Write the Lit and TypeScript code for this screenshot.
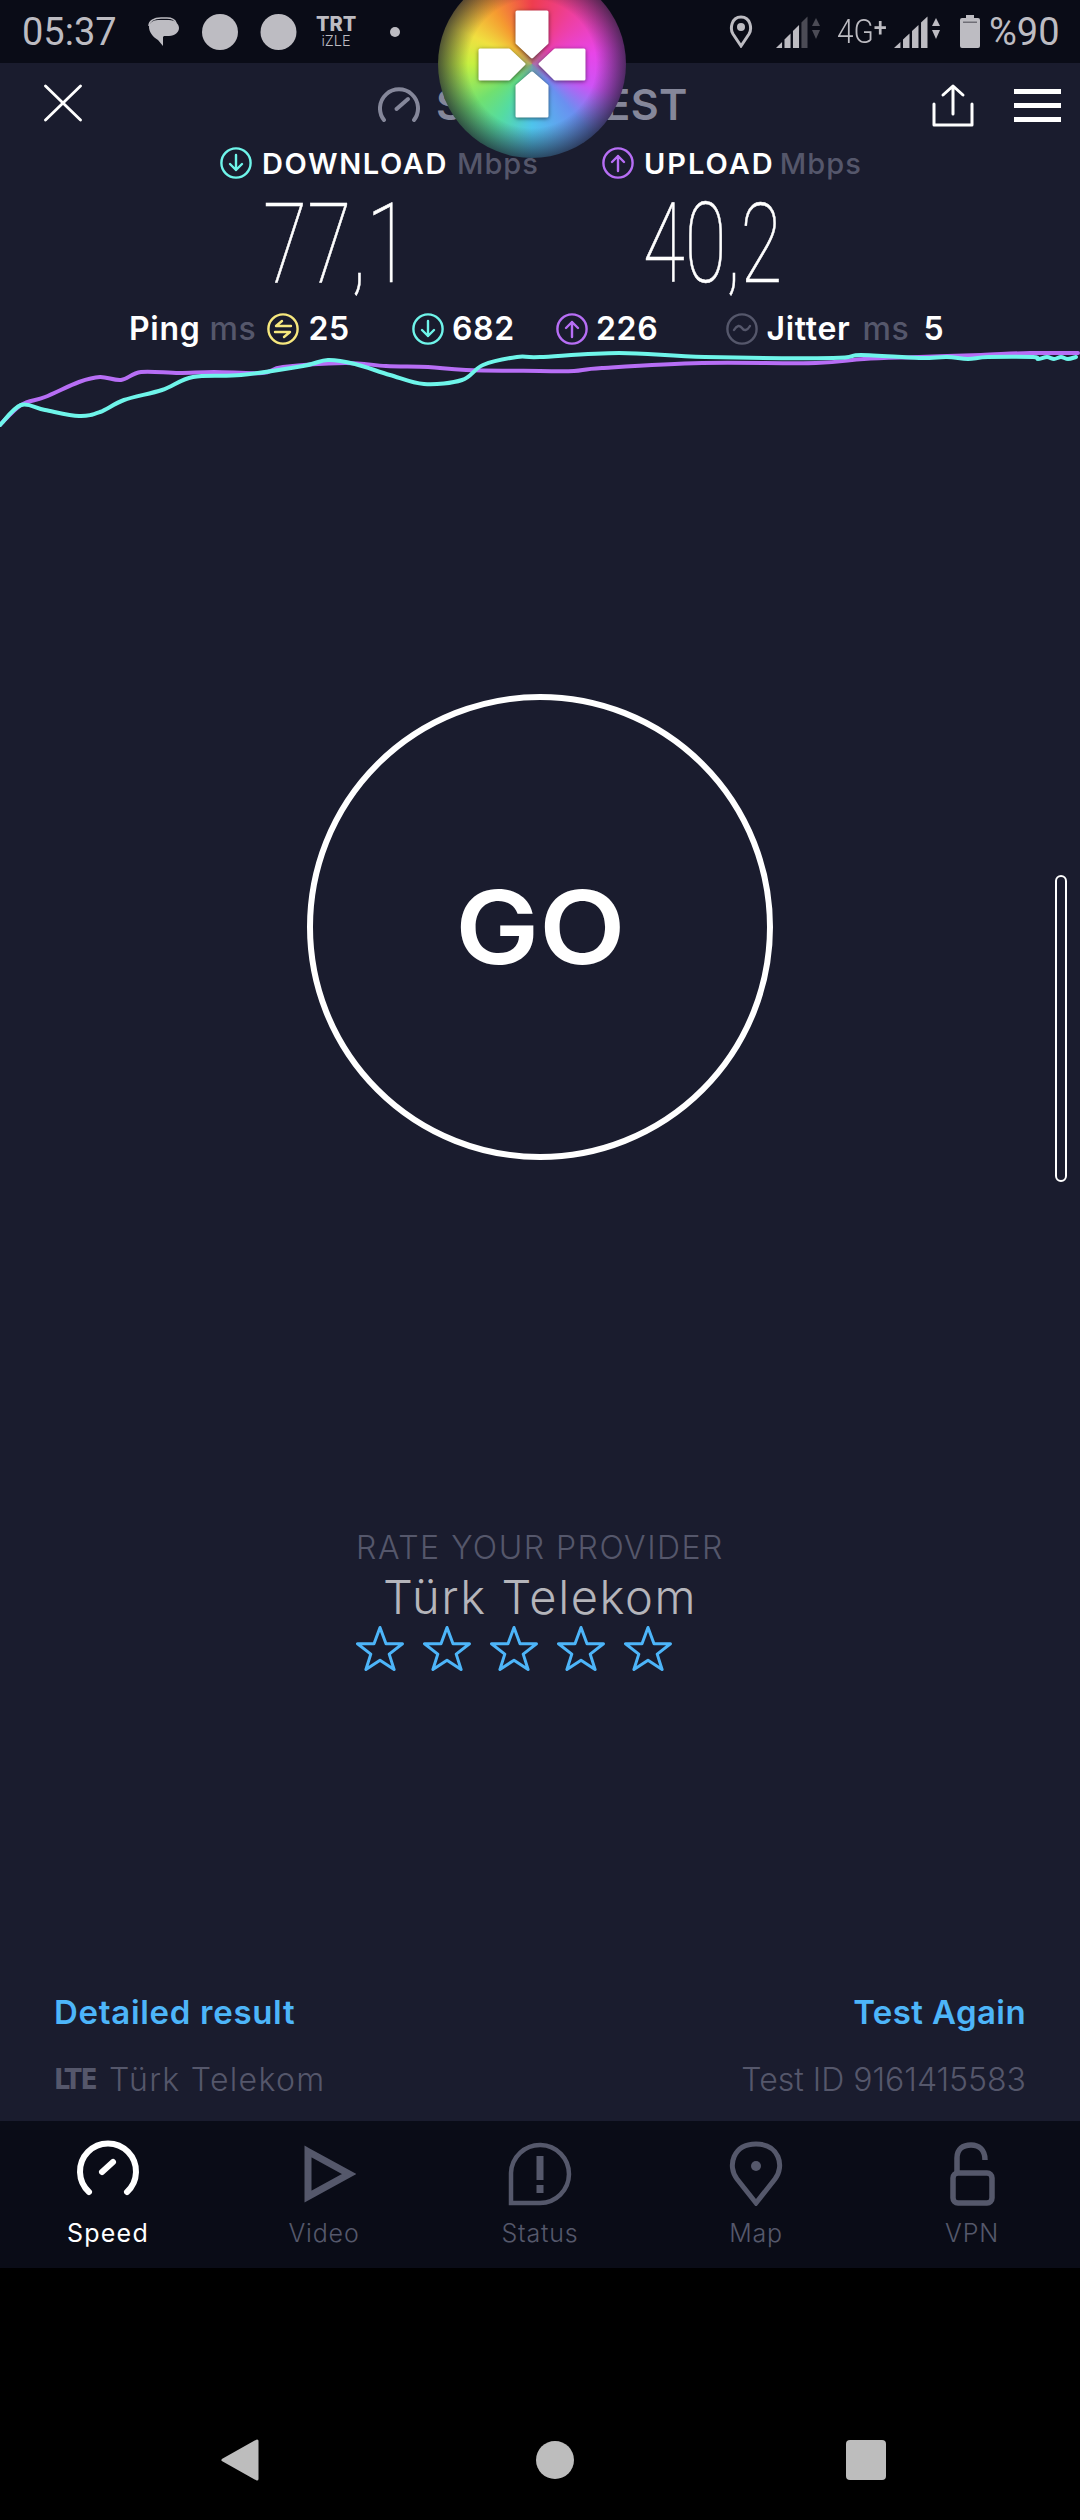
import { css, html, LitElement, svg } from "lit";
import { customElement } from "lit/decorators.js";

type Point = [number, number];

// chart traces, in page pixels
const DOWN_TRACE: Point[] = [
  [0, 425], [21, 405], [45, 410], [79, 416], [100, 412], [124, 400], [162, 390], [193, 377], [241, 375],
  [303, 366], [328, 360], [355, 364], [390, 375], [424, 384], [462, 380], [483, 365], [517, 357], [540, 357],
  [619, 353], [705, 357], [833, 358], [861, 355], [919, 358], [947, 357], [968, 359], [988, 357], [1033, 357],
  [1038, 359], [1047, 357], [1054, 359], [1061, 357], [1068, 359], [1076, 357],
];
const UP_TRACE: Point[] = [
  [0, 425], [21, 405], [45, 397], [79, 382], [100, 377], [121, 380], [141, 372], [179, 373], [214, 372],
  [262, 373], [283, 367], [345, 363], [386, 366], [428, 367], [466, 370], [540, 371], [574, 371], [602, 368],
  [702, 363], [816, 363], [864, 359], [919, 357], [981, 355], [1030, 353], [1078, 353],
];
const GRAPH_TOP = 345;

// catmull-rom through the samples so the lines stay smooth
function tracePath(points: Point[]) {
  let d = `M${points[0][0]} ${points[0][1] - GRAPH_TOP}`;
  for (let i = 0; i < points.length - 1; i++) {
    const p0 = points[Math.max(i - 1, 0)];
    const p1 = points[i];
    const p2 = points[i + 1];
    const p3 = points[Math.min(i + 2, points.length - 1)];
    const c1x = p1[0] + (p2[0] - p0[0]) / 6;
    const c1y = p1[1] + (p2[1] - p0[1]) / 6 - GRAPH_TOP;
    const c2x = p2[0] - (p3[0] - p1[0]) / 6;
    const c2y = p2[1] - (p3[1] - p1[1]) / 6 - GRAPH_TOP;
    d += `C${c1x.toFixed(1)} ${c1y.toFixed(1)} ${c2x.toFixed(1)} ${c2y.toFixed(1)} ${p2[0]} ${p2[1] - GRAPH_TOP}`;
  }
  return d;
}

const ringGlyphs = {
  down: "M16 8v15M10 17l6 6 6-6",
  up: "M16 24V9M10 15l6-6 6 6",
  ping: "M24 13H9l6-5M8 19h15l-6 5",
  jitter: "M8 17c3-5 6-5 8-2s5 3 8-2",
};

function ringIcon(color: string, glyph: keyof typeof ringGlyphs) {
  return html`<svg class="ring" width="32" height="32" viewBox="0 0 32 32" fill="none" stroke=${color} stroke-width="2.4" stroke-linecap="round" stroke-linejoin="round">
    <circle cx="16" cy="16" r="14.6"></circle>
    <path d=${ringGlyphs[glyph]}></path>
  </svg>`;
}

function signalBars(width: number, litBars: number) {
  const bars = [0, 0.265, 0.53, 0.795];
  const barW = width * 0.19;
  return bars.map((start, i) => {
    const x0 = start * width;
    const x1 = x0 + barW;
    return svg`<polygon fill=${i < litBars ? "#bdbcc2" : "#4b4b55"} points="${x0},32 ${x0},${32 - (x0 * 32) / width} ${x1},${32 - (x1 * 32) / width} ${x1},32"></polygon>`;
  });
}

function signalIcon(width: number, litBars: number, arrowColor: string) {
  return html`<svg width=${width + 12} height="32" viewBox="0 0 ${width + 12} 32">
    ${signalBars(width, litBars)}
    <path fill=${arrowColor} d="M${width + 8} 2l4 8h-8zM${width + 4} 14h8l-4 9z"></path>
  </svg>`;
}

function star() {
  return html`<svg width="48" height="46" viewBox="0 0 48 46" fill="none" stroke="#4db5f9" stroke-width="3" stroke-linejoin="round">
    <path d="M24 2.5l6 16.2h16.5l-13.3 10.4 4.9 15.4L24 35.2 9.900 44.500l4.900-15.400L1.500 18.700H18z"></path>
  </svg>`;
}

@customElement("app-root")
export class AppRoot extends LitElement {
  static override styles = css`
    :host {
      display: block;
      position: relative;
      width: 1080px;
      height: 2520px;
      overflow: hidden;
      background: #000;
      font-family: Inter, "Noto Sans", sans-serif;
      color: #fff;
    }

    svg {
      display: block;
      flex: none;
    }

    /* system status bar */
    .status {
      display: flex;
      align-items: center;
      height: 63px;
      background: #0a0c17;
      color: #bdbcc2;
      font-family: Roboto, sans-serif;
      font-size: 38px;
      padding-left: 22px;
    }
    .status .time {
      width: 125px;
      flex: none;
    }
    .trt {
      width: 40px;
      margin-left: 19px;
      flex: none;
      text-align: center;
      font-family: Inter, sans-serif;
      line-height: 1;
    }
    .trt b {
      display: block;
      font-size: 20px;
      font-weight: 800;
      height: 19px;
      line-height: 18px;
    }
    .trt span {
      display: block;
      font-size: 14.500px;
      font-weight: 300;
      height: 14px;
    }
    .status-dot {
      width: 10px;
      height: 10px;
      border-radius: 50%;
      background: #bdbcc2;
      margin-left: 34px;
      flex: none;
    }
    .status-right {
      display: flex;
      align-items: center;
      margin-left: 329px;
    }
    .net {
      width: 50px;
      margin-left: 17px;
      flex: none;
      font-size: 33px;
      font-weight: 300;
      line-height: 1;
    }
    .net span {
      display: inline-block;
      transform: scaleX(0.9);
      transform-origin: left center;
      white-space: nowrap;
    }
    .net sup {
      font-size: 26px;
      font-weight: 500;
      vertical-align: 7px;
      line-height: 0;
    }

    /* results page */
    main {
      display: flex;
      flex-direction: column;
      height: 2058px;
      background: #1a1c2e;
    }

    .app-bar {
      display: flex;
      align-items: flex-start;
      height: 84px;
      padding-top: 20px;
      box-sizing: border-box;
      padding-left: 44px;
    }
    .brand {
      display: flex;
      align-items: center;
      margin-left: 296px;
      width: 555px;
      height: 42px;
      color: #85879a;
      font-size: 43px;
      font-weight: 600;
    }
    .brand span {
      margin-left: 16px;
      letter-spacing: 0.4px;
    }
    .menu {
      display: flex;
      flex-direction: column;
      gap: 9px;
      margin: 6px 0 0 40px;
      width: 47px;
    }
    .menu i {
      display: block;
      height: 5px;
      background: #fff;
    }

    .speed-labels {
      display: flex;
      height: 34px;
      padding-left: 220px;
      font-size: 29px;
      font-weight: 600;
      line-height: 32px;
    }
    .speed-label {
      display: flex;
      align-items: center;
      height: 32px;
      white-space: nowrap;
    }
    .speed-label.down {
      width: 382px;
    }
    .speed-label b {
      font-weight: 600;
      margin: 2px 0 0 10px;
      letter-spacing: 1.6px;
    }
    .speed-label.up b {
      letter-spacing: 2px;
    }
    .speed-label em {
      font-style: normal;
      font-weight: 500;
      color: #55576b;
      margin: 2px 0 0 9px;
      letter-spacing: 1px;
    }
    .speed-label.up em {
      margin-left: 5px;
    }

    .speed-values {
      display: flex;
      height: 131px;
      padding-left: 263px;
      box-sizing: border-box;
      padding-top: 3px;
      font-family: Roboto, sans-serif;
      font-weight: 100;
      font-size: 112px;
      line-height: 119px;
    }
    .speed-values div {
      width: 383px;
    }
    .speed-values span {
      display: inline-block;
      transform: scaleX(0.72);
      transform-origin: left center;
      -webkit-text-stroke: 0.6px #fff;
    }
    .speed-values .upload {
      margin-left: -3px;
      transform: scaleX(0.68);
    }

    .stats {
      display: flex;
      align-items: center;
      height: 33px;
      padding-left: 129px;
      font-size: 32px;
      font-weight: 600;
      line-height: 32px;
      letter-spacing: 0.7px;
      white-space: nowrap;
    }
    .stats span,
    .stats svg,
    .stats em {
      flex: none;
    }
    .stats em {
      font-style: normal;
      font-weight: 500;
      color: #55576b;
    }
    .stats .with-icon {
      display: flex;
    }

    .graph {
      height: 85px;
    }

    .go {
      display: flex;
      align-items: center;
      justify-content: center;
      width: 466px;
      height: 466px;
      box-sizing: border-box;
      margin: 264px 0 0 307px;
      border: 6px solid #fff;
      border-radius: 50%;
      font-size: 102px;
      font-weight: 600;
    }
    .go span {
      display: inline-block;
      transform: scaleX(1.1);
    }

    .rate {
      margin-top: 369px;
      text-align: center;
    }
    .rate-title {
      font-size: 32px;
      font-weight: 300;
      line-height: 38px;
      color: #55576b;
      letter-spacing: 1.5px;
    }
    .rate-name {
      margin-top: 2px;
      font-size: 47px;
      font-weight: 300;
      line-height: 56px;
      color: #b5b5bb;
      letter-spacing: 1.6px;
    }
    .stars {
      display: flex;
      gap: 19px;
      margin: 0 0 0 356px;
    }

    footer {
      margin-top: auto;
      padding: 0 54px 22px 54px;
    }
    .links,
    .meta {
      display: flex;
      justify-content: space-between;
      align-items: center;
      line-height: 38px;
    }
    .links {
      color: #4db5f9;
      font-size: 33px;
      font-weight: 600;
      letter-spacing: 0.7px;
    }
    .links .again {
      letter-spacing: 0.4px;
    }
    .meta {
      margin-top: 30px;
      color: #55576b;
      font-size: 32px;
      font-weight: 300;
    }
    .meta .carrier {
      display: flex;
      align-items: center;
      letter-spacing: 1.3px;
    }
    .lte {
      display: inline-block;
      width: 55px;
      font-family: "DejaVu Sans Condensed", "DejaVu Sans", sans-serif;
      font-weight: 700;
      font-size: 28px;
      letter-spacing: -1px;
    }

    /* bottom tabs */
    nav {
      display: grid;
      grid-template-columns: repeat(5, 216px);
      height: 147px;
      background: #0a0c17;
    }
    .tab {
      display: flex;
      flex-direction: column;
      align-items: center;
      padding-top: 19px;
      color: #55586b;
      font-size: 25px;
      font-weight: 300;
      letter-spacing: 0.8px;
    }
    .tab.active {
      color: #fff;
      font-weight: 400;
      letter-spacing: 1.2px;
    }
    .tab span {
      margin-top: 12px;
      line-height: 30px;
    }

    /* android navigation */
    .system-nav {
      display: flex;
      align-items: center;
      height: 252px;
      padding: 172px 0 40px;
      box-sizing: border-box;
      background: #000;
    }
    .home {
      width: 38px;
      height: 38px;
      margin-left: 277px;
      border-radius: 50%;
      background: #bdbdbd;
    }
    .recents {
      width: 40px;
      height: 40px;
      margin-left: 272px;
      border-radius: 4px;
      background: #bdbdbd;
    }

    /* floating things above the page */
    .scroll-thumb {
      position: absolute;
      left: 1055px;
      top: 875px;
      width: 12px;
      height: 307px;
      box-sizing: border-box;
      border: 2px solid #fff;
      border-radius: 6px;
      background: #1a1c2e;
    }
    .bubble {
      position: absolute;
      left: 438px;
      top: -30px;
      width: 188px;
      height: 188px;
      border-radius: 50%;
      background:
        radial-gradient(circle closest-side, rgba(140, 135, 130, 0.6) 0 3%, transparent 24%),
        radial-gradient(circle closest-side, transparent 68%, rgba(26, 28, 46, 0.72) 100%),
        conic-gradient(
          #ee3d4e 0deg,
          #ee3fa0 40deg,
          #e845e8 80deg,
          #cf52f5 110deg,
          #6a90f0 140deg,
          #4fc4ec 180deg,
          #55dca0 210deg,
          #70e070 235deg,
          #c6f041 270deg,
          #f0e040 295deg,
          #f59a30 325deg,
          #ee3d4e 360deg
        );
    }
    .bubble svg {
      filter: drop-shadow(0 1px 2px rgba(0, 0, 0, 0.55));
    }
  `;

  override render() {
    return html`
      <div class="status">
        <div class="time">05:37</div>
        <svg width="32" height="31" viewBox="0 0 32 31">
          <path fill="none" stroke="#bdbcc2" stroke-width="1.500" d="M2 10c0-5 5-8 12-8h6c5 0 8 2 9 5"></path>
          <path fill="#bdbcc2" d="M2 11c0-4 4-7 9-7h11c6 0 10 4 10 8s-4 8-10 8h-5l-1 1v9l-5-6c-5-3-9-8-9-13z"></path>
        </svg>
        <svg style="margin-left:23px" width="36" height="36" viewBox="0 0 36 36"><circle cx="18" cy="18" r="18" fill="#bdbcc2"></circle></svg>
        <svg style="margin-left:22px" width="37" height="36" viewBox="0 0 37 36"><circle cx="18.500" cy="18" r="18" fill="#bdbcc2"></circle></svg>
        <div class="trt"><b>TRT</b><span>iZLE</span></div>
        <div class="status-dot"></div>
        <div class="status-right">
          <svg width="24" height="33" viewBox="0 0 24 33" fill="none" stroke="#bdbcc2" stroke-width="3">
            <path d="M12 31L4 19C1 14 2 2 12 2s11 12 8 17z"></path>
            <circle cx="12" cy="12" r="4" fill="#bdbcc2" stroke="none"></circle>
          </svg>
          <div style="margin-left:23px">${signalIcon(32, 3, "#4b4b55")}</div>
          <div class="net"><span>4G<sup>+</sup></span></div>
          <div style="margin-left:7px">${signalIcon(34, 4, "#bdbcc2")}</div>
          <svg style="margin-left:20px" width="20" height="33" viewBox="0 0 20 33">
            <path fill="#bdbcc2" d="M6 0h8v3h4a2 2 0 0 1 2 2v26a2 2 0 0 1-2 2H2a2 2 0 0 1-2-2V5a2 2 0 0 1 2-2h4z"></path>
            <rect x="3" y="6.500" width="14" height="1.500" fill="#6f6e76"></rect>
          </svg>
          <div style="margin-left:9px">%90</div>
        </div>
      </div>

      <main>
        <div class="app-bar">
          <svg width="38" height="40" viewBox="0 0 38 40" stroke="#fff" stroke-width="2.800" stroke-linecap="round">
            <path d="M1.500 3l35 34M36.500 3l-35 34"></path>
          </svg>
          <div class="brand">
            <svg width="42" height="36" viewBox="0 0 42 36" fill="none" stroke="#85879a" stroke-width="4" stroke-linecap="round">
              <path d="M6 34A19 19 0 1 1 36 34"></path>
              <path d="M18.500 23L30 13"></path>
            </svg>
            <span>SPEEDTEST</span>
          </div>
          <svg width="42" height="44" viewBox="0 0 42 44" fill="none" stroke="#fff" stroke-width="3" stroke-linecap="round" stroke-linejoin="round" style="margin-left:-1px">
            <path d="M2 21v21h38V21"></path>
            <path d="M21 31V3M11 12l10-9 10 9"></path>
          </svg>
          <div class="menu"><i></i><i></i><i></i></div>
        </div>

        <div class="speed-labels">
          <div class="speed-label down">${ringIcon("#6ff5ea", "down")}<b>DOWNLOAD</b><em>Mbps</em></div>
          <div class="speed-label up">${ringIcon("#b76ef5", "up")}<b>UPLOAD</b><em>Mbps</em></div>
        </div>

        <div class="speed-values">
          <div><span>77,1</span></div>
          <div><span class="upload">40,2</span></div>
        </div>

        <div class="stats">
          <span>Ping</span>
          <em style="margin-left:9px">ms</em>
          <span class="with-icon" style="margin-left:11px">${ringIcon("#f7e87e", "ping")}</span>
          <span style="margin-left:9px">25</span>
          <span class="with-icon" style="margin-left:62px">${ringIcon("#6ff5ea", "down")}</span>
          <span style="margin-left:8px">682</span>
          <span class="with-icon" style="margin-left:41px">${ringIcon("#b76ef5", "up")}</span>
          <span style="margin-left:8px">226</span>
          <span class="with-icon" style="margin-left:68px">${ringIcon("#55576b", "jitter")}</span>
          <span style="margin-left:8px">Jitter</span>
          <em style="margin-left:12px">ms</em>
          <span style="margin-left:14px">5</span>
        </div>

        <svg class="graph" width="1080" height="85" viewBox="0 0 1080 85" fill="none" stroke-width="4" stroke-linecap="round" stroke-linejoin="round">
          <path d=${tracePath(UP_TRACE)} stroke="#b76ef5"></path>
          <path d=${tracePath(DOWN_TRACE)} stroke="#6ff5ea"></path>
        </svg>

        <div class="go"><span>GO</span></div>

        <div class="rate">
          <div class="rate-title">RATE YOUR PROVIDER</div>
          <div class="rate-name">Türk Telekom</div>
        </div>
        <div class="stars">${star()}${star()}${star()}${star()}${star()}</div>

        <footer>
          <div class="links"><span>Detailed result</span><span class="again">Test Again</span></div>
          <div class="meta">
            <span class="carrier"><span class="lte">LTE</span><span>Türk Telekom</span></span>
            <span>Test ID 9161415583</span>
          </div>
        </footer>
      </main>

      <nav>
        <div class="tab active">
          <svg width="64" height="66" viewBox="0 0 64 66" fill="none" stroke="#fff" stroke-width="6" stroke-linecap="round">
            <path d="M13 52A28 28 0 1 1 51 52"></path>
            <path d="M26 32L37 22"></path>
          </svg>
          <span>Speed</span>
        </div>
        <div class="tab">
          <svg width="64" height="66" viewBox="0 0 64 66" fill="none" stroke="#55586b" stroke-width="7">
            <path d="M16 11.500L57 34 16 56.500z"></path>
          </svg>
          <span>Video</span>
        </div>
        <div class="tab">
          <svg width="64" height="66" viewBox="0 0 64 66" fill="none" stroke="#55586b" stroke-width="4.500">
            <path d="M3 63V33a29 29 0 1 1 29 30z"></path>
            <path d="M32 16v24M32 45v8" stroke-width="7"></path>
          </svg>
          <span>Status</span>
        </div>
        <div class="tab">
          <svg width="64" height="66" viewBox="0 0 64 66" fill="none" stroke="#55586b" stroke-width="5">
            <path d="M32 63L13 39C3 26 9 4 32 4s29 22 19 35z"></path>
            <circle cx="32" cy="26" r="5" fill="#55586b" stroke="none"></circle>
          </svg>
          <span>Map</span>
        </div>
        <div class="tab">
          <svg width="64" height="66" viewBox="0 0 64 66" fill="none" stroke="#55586b" stroke-width="5.500">
            <rect x="13" y="33" width="39" height="30" rx="5"></rect>
            <path d="M17 33V18c0-9 6-13 14-13s14 5 14 15"></path>
          </svg>
          <span>VPN</span>
        </div>
      </nav>

      <div class="system-nav">
        <svg style="margin-left:221px" width="38" height="42" viewBox="0 0 38 42">
          <path fill="#bdbdbd" stroke="#bdbdbd" stroke-width="3" stroke-linejoin="round" d="M2 21L36 2v38z"></path>
        </svg>
        <div class="home"></div>
        <div class="recents"></div>
      </div>

      <div class="scroll-thumb"></div>
      <div class="bubble">
        <svg width="188" height="188" viewBox="0 0 188 188" fill="#fff" stroke="#fff" stroke-width="3" stroke-linejoin="round">
          <path d="M79 42h30v31L94 87 79 73z"></path>
          <path d="M42 80h29l15 14-15 15H42z"></path>
          <path d="M146 80h-29l-15 14 15 15h29z"></path>
          <path d="M79 146h30v-30L94 103 79 116z"></path>
        </svg>
      </div>
    `;
  }
}
